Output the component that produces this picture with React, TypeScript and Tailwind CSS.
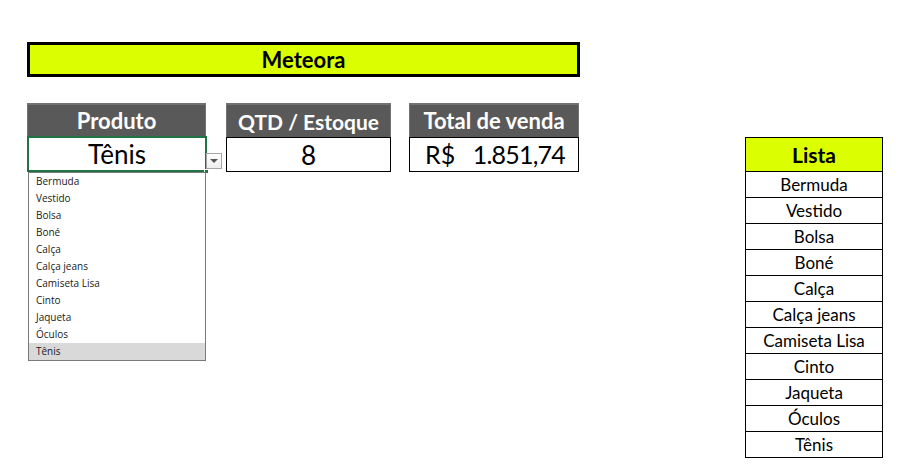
import React from "react";

const items = [
  "Bermuda",
  "Vestido",
  "Bolsa",
  "Boné",
  "Calça",
  "Calça jeans",
  "Camiseta Lisa",
  "Cinto",
  "Jaqueta",
  "Óculos",
  "Tênis",
];

export default function App() {
  return (
    <div className="w-[902px] h-[467px] bg-white flex font-['Lato',sans-serif] text-black overflow-hidden">
      <div className="ml-[27px] mt-[42px] w-[553px] flex flex-col">
        <div className="h-[35px] border-[3px] border-black bg-[#dcff00] flex items-center justify-center font-bold text-[22px] leading-none">
          Meteora
        </div>
        <div className="mt-[26px] flex">
          {/* Produto */}
          <div className="relative w-[179px]">
            <div className="h-[34px] bg-[#595959] border-t-2 border-x border-[#727272] text-white font-bold text-[22px] leading-none flex items-center justify-center">
              Produto
            </div>
            <div className="relative w-[180px] h-[36px] -mt-px border-2 border-[#217346] bg-white flex items-center justify-center text-[26px] leading-none">
              Tênis
              <div className="absolute right-[-4px] bottom-[-4px] w-[5px] h-[5px] bg-[#217346] border border-white" />
            </div>
            <div className="absolute left-[179px] top-[50px] w-[16px] h-[16px] border border-[#a6a6a6] bg-gradient-to-b from-white to-[#eeeeee] flex items-center justify-center">
              <div className="w-0 h-0 border-l-[4px] border-r-[4px] border-t-[4px] border-l-transparent border-r-transparent border-t-[#555555]" />
            </div>
            <div className="absolute left-[1px] top-[69px] w-[178px] border border-[#7a7a7a] bg-white font-['Open_Sans',sans-serif] text-[10px] text-[#1a1a1a] flex flex-col">
              {items.map((it) => (
                <div
                  key={it}
                  className={
                    it === "Tênis"
                      ? "h-[17px] pl-[7px] flex items-center bg-[#d9d9d9]"
                      : "h-[17px] pl-[7px] flex items-center"
                  }
                >
                  {it}
                </div>
              ))}
            </div>
          </div>
          {/* QTD */}
          <div className="ml-[20px] w-[165px]">
            <div className="h-[34px] bg-[#595959] border-t-2 border-x border-[#727272] text-white font-bold text-[21px] leading-none flex items-center justify-center">
              QTD / Estoque
            </div>
            <div className="h-[35px] border border-black flex items-center justify-center text-[26px] leading-none">
              8
            </div>
          </div>
          {/* Total */}
          <div className="ml-[18px] w-[170px]">
            <div className="h-[34px] bg-[#595959] border-t-2 border-x border-[#727272] text-white font-bold text-[22px] leading-none flex items-center justify-center">
              Total de venda
            </div>
            <div className="h-[35px] border border-black flex items-center justify-between pl-[15px] pr-[13px] text-[25px] leading-none">
              <span>R$</span>
              <span className="tracking-[-0.8px]">1.851,74</span>
            </div>
          </div>
        </div>
      </div>
      {/* Lista */}
      <div className="ml-[165px] mt-[137px] w-[138px] self-start border border-black">
        <div className="h-[34px] bg-[#dcff00] border-b border-black flex items-center justify-center font-bold text-[21px] leading-none">
          Lista
        </div>
        {items.map((it, i) => (
          <div
            key={it}
            className={
              i === items.length - 1
                ? "h-[25px] flex items-center justify-center text-[17px] leading-none"
                : "h-[26px] border-b border-black flex items-center justify-center text-[17px] leading-none"
            }
          >
            {it}
          </div>
        ))}
      </div>
    </div>
  );
}
